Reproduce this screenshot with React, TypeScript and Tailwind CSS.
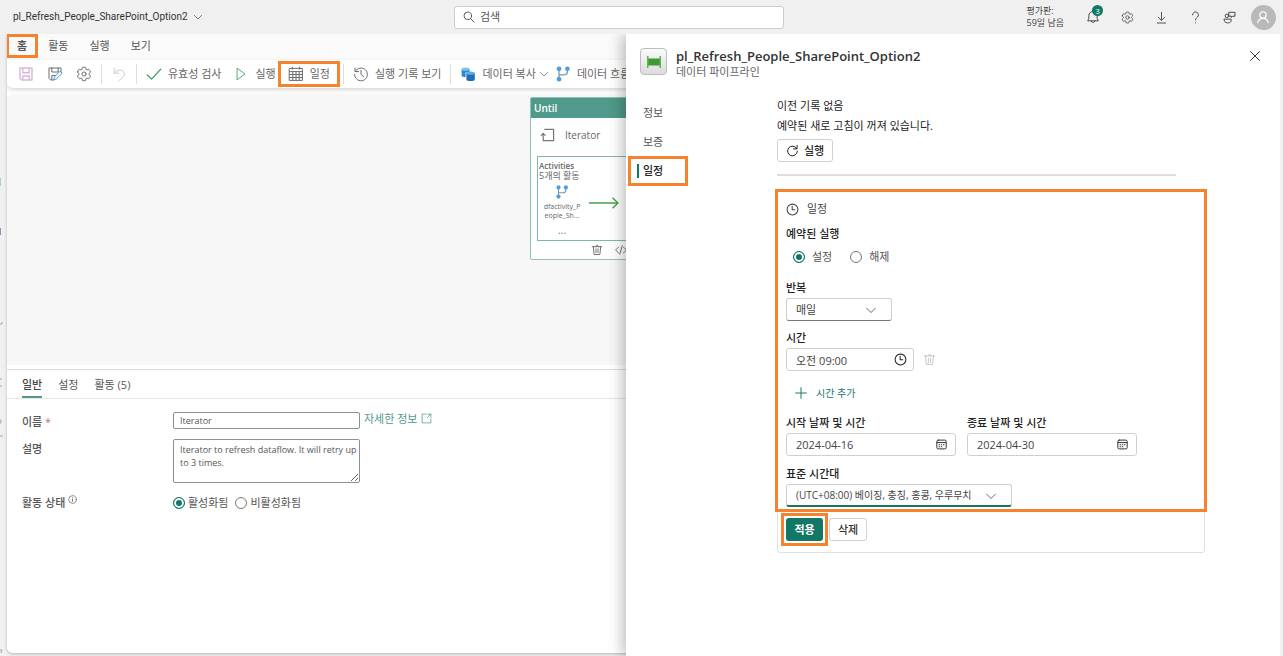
import type { ReactNode } from 'react'

type IconProps = { className?: string; children?: ReactNode }

function Icon({ className = 'size-4', children }: IconProps) {
  return (
    <svg
      viewBox="0 0 20 20"
      fill="none"
      stroke="currentColor"
      strokeWidth="1.2"
      strokeLinecap="round"
      strokeLinejoin="round"
      aria-hidden="true"
      className={`shrink-0 ${className}`}
    >
      {children}
    </svg>
  )
}

const Chevron = ({ className = 'size-[10px]' }: IconProps) => (
  <Icon className={className}>
    <path d="M1 6l9 9 9-9" strokeWidth="1.6" />
  </Icon>
)

const Gear = ({ className }: IconProps) => (
  <Icon className={className}>
    <path d="M1.91 7.38A8.5 8.5 0 0 1 3.7 4.3a.5.5 0 0 1 .54-.13l1.92.68a1 1 0 0 0 1.32-.76l.36-2a.5.5 0 0 1 .4-.4 8.53 8.53 0 0 1 3.55 0c.2.04.35.2.38.4l.37 2a1 1 0 0 0 1.32.76l1.92-.68a.5.5 0 0 1 .54.13 8.5 8.5 0 0 1 1.78 3.08c.06.2 0 .4-.15.54l-1.56 1.32a1 1 0 0 0 0 1.52l1.56 1.32a.5.5 0 0 1 .15.54 8.5 8.5 0 0 1-1.78 3.08.5.5 0 0 1-.54.13l-1.92-.68a1 1 0 0 0-1.32.76l-.37 2a.5.5 0 0 1-.38.4 8.53 8.53 0 0 1-3.56 0 .5.5 0 0 1-.39-.4l-.36-2a1 1 0 0 0-1.32-.76l-1.92.68a.5.5 0 0 1-.54-.13 8.5 8.5 0 0 1-1.78-3.08.5.5 0 0 1 .15-.54l1.56-1.32a1 1 0 0 0 0-1.52L2.06 7.92a.5.5 0 0 1-.15-.54z" />
    <circle cx="10" cy="10" r="2.6" />
  </Icon>
)

const Clock = ({ className }: IconProps) => (
  <Icon className={className}>
    <circle cx="10" cy="10" r="8.3" strokeWidth="1.6" />
    <path d="M9.5 5v5.5h4" strokeWidth="1.6" />
  </Icon>
)

const Trash = ({ className }: IconProps) => (
  <Icon className={className}>
    <path d="M2 4.5h16M7.5 4.5C7.5 1 12.5 1 12.5 4.5M3.8 4.5l1.4 13h9.6l1.4-13M8.3 8v6.5M11.7 8v6.5" strokeWidth="1.5" />
  </Icon>
)

const Branch = ({ className }: IconProps) => (
  <Icon className={className}>
    <path d="M5 4v12M5 11h6.5c2.5 0 4-1.5 4-4V4" stroke="#7f95a8" strokeWidth="1.6" />
    <g fill="#4f9fdc" stroke="none">
      <circle cx="5" cy="3.5" r="3" />
      <circle cx="15.5" cy="3.5" r="3" />
      <circle cx="5" cy="16.5" r="3" />
    </g>
  </Icon>
)

const CalendarSmall = () => (
  <Icon className="size-[11px] text-[#333]">
    <rect x="1.5" y="2" width="17" height="16" rx="2.5" strokeWidth="1.8" />
    <path d="M2 6.5h16" strokeWidth="1.8" />
    <path d="M5.5 10.5h1M9.5 10.5h1M13.5 10.5h1M5.5 14h1M9.5 14h1" strokeWidth="2" />
  </Icon>
)

/** Orange call-out frame drawn over the element that contains it. */
function Callout({ className }: { className: string }) {
  return <span aria-hidden="true" className={`pointer-events-none absolute border-3 border-[#f5822f] ${className}`} />
}

function Divider() {
  return <span className="mx-[9px] h-5 w-px shrink-0 bg-[#dedede]" />
}

function Tool({ label, children }: { label: string; children: ReactNode }) {
  return (
    <button type="button" className="flex shrink-0 items-center gap-[6px] whitespace-nowrap">
      {children}
      {label}
    </button>
  )
}

const radio =
  'size-3 shrink-0 appearance-none rounded-full border border-[#757575] bg-white checked:border-[#117865] checked:bg-[#117865] checked:shadow-[inset_0_0_0_2px_white]'
const field = 'h-[23px] w-full rounded-[3px] border border-[#cfcfcf] bg-white pl-[9px] text-[#444]'
const textField = 'rounded-[2px] border border-[#8f8f8f] pl-[6px] text-[9px]'

function TopBar() {
  return (
    <header className="mr-[3px] flex h-[34px] shrink-0 items-center text-[#444]">
      <div className="flex shrink-0 basis-[454px] items-center pl-[13px]">
        <button type="button" className="flex items-center gap-[6px] font-['Roboto','Noto_Sans_CJK_KR',sans-serif] text-[10px] text-[#333]">
          pl_Refresh_People_SharePoint_Option2
          <Chevron className="size-2" />
        </button>
      </div>
      <label className="flex h-[23px] w-[330px] items-center gap-[5px] rounded-[3px] border border-[#cccccc] bg-white pl-2">
        <Icon className="size-3 text-[#555]">
          <circle cx="8" cy="8" r="6.3" strokeWidth="1.6" />
          <path d="M12.7 12.7L18.5 18.5" strokeWidth="1.6" />
        </Icon>
        <input type="search" aria-label="검색" placeholder="검색" className="min-w-0 flex-1 bg-transparent outline-none placeholder:text-[#555]" />
      </label>
      <p className="ml-auto pr-3 text-[9px] leading-3 whitespace-nowrap">
        평가판:
        <br />
        59일 남음
      </p>
      <nav className="grid shrink-0 grid-cols-[repeat(6,34px)] place-items-center">
        <button type="button" aria-label="알림" className="relative">
          <Icon className="size-[14px]">
            <path d="M10 2a6 6 0 0 0-6 6v4l-1.5 3.5h15L16 12V8a6 6 0 0 0-6-6zM7.5 15.5c0 3.3 5 3.3 5 0" strokeWidth="1.4" />
          </Icon>
          <span className="absolute -top-[5px] left-[6px] size-[11px] rounded-full bg-[#117865] text-center text-[8px] leading-[11px] text-white">3</span>
        </button>
        <button type="button" aria-label="설정">
          <Gear className="size-[13px]" />
        </button>
        <button type="button" aria-label="다운로드">
          <Icon className="size-[13px]">
            <path d="M10 2v12M5 9.5l5 5 5-5M3.5 18.5h13" strokeWidth="1.4" />
          </Icon>
        </button>
        <button type="button" aria-label="도움말">
          <Icon className="size-[13px]">
            <path d="M5.5 6a4.5 4.5 0 1 1 7.5 3.3c-1.7 1.5-3 2.5-3 4.7M10 18v.3" strokeWidth="1.5" />
          </Icon>
        </button>
        <button type="button" aria-label="피드백">
          <Icon className="size-[13px]">
            <path d="M9.5 2h9v6h-3.5l-2 2V8h-3.5zM2 12.5h10.5v2.5c0 4.5-10.5 4.5-10.5 0z" strokeWidth="1.5" />
            <circle cx="6" cy="7.5" r="2.7" strokeWidth="1.5" />
          </Icon>
        </button>
        <button type="button" aria-label="계정" className="grid size-[25px] place-items-center rounded-full bg-[#b9b9b9] text-white">
          <Icon className="size-[14px]">
            <circle cx="10" cy="7" r="4.5" strokeWidth="1.7" />
            <path d="M2.5 18c1-4 3-6 7.5-6s6.5 2 7.5 6" strokeWidth="1.7" />
          </Icon>
        </button>
      </nav>
    </header>
  )
}

function Ribbon() {
  return (
    <>
      <nav className="flex h-[26px] items-center gap-[21px] bg-[#fafafa] pr-4 pb-[3px] pl-[10px] text-[#555]">
        <button type="button" className="relative font-semibold">
          홈
          <Callout className="-inset-x-[11px] -top-[4px] -bottom-[4px]" />
        </button>
        <button type="button">활동</button>
        <button type="button">실행</button>
        <button type="button">보기</button>
      </nav>
      <div className="flex h-7 shrink-0 items-center overflow-visible rounded-b-md bg-white pl-[11px] text-[#666] shadow-[0_2px_4px_rgba(0,0,0,0.16)]">
        <div className="flex items-center gap-[13px]">
          <button type="button" aria-label="저장" className="text-[#d9b8dc]">
            <Icon>
              <path d="M2.5 2.5h15v15h-13l-2-2zM6 2.5v6h8v-6M6 17.5v-5h8v5" strokeWidth="1.8" />
            </Icon>
          </button>
          <button type="button" aria-label="다른 이름으로 저장">
            <Icon>
              <path d="M8 17.5H4.5l-2-2v-13h15v5M6 2.5v5h8v-5M6 17v-5h5" />
              <path d="M8.5 17l.8-3.5 7.2-7 2.5 2.5-7.2 7z" stroke="#3f94d6" />
            </Icon>
          </button>
          <button type="button" aria-label="파이프라인 설정">
            <Gear />
          </button>
        </div>
        <Divider />
        <button type="button" aria-label="실행 취소" className="text-[#c9c9c9]">
          <Icon>
            <path d="M4 3v6h6M4 9c4-5.5 11-5 12.5-.5 1.2 4-2.5 6.5-7 10" />
          </Icon>
        </button>
        <Divider />
        <div className="flex items-center gap-3 pr-1">
          <Tool label="유효성 검사">
            <Icon className="size-4 text-[#2f9a5b]">
              <path d="M1.5 11l5.5 5.5L18.5 4" strokeWidth="1.5" />
            </Icon>
          </Tool>
          <Tool label="실행">
            <Icon className="size-4 text-[#4aa96f]">
              <path d="M5.5 3l9.5 7-9.5 7z" />
            </Icon>
          </Tool>
          <div className="relative">
            <Tool label="일정">
              <Icon>
                <path d="M2 3h16v15H2zM2 7h16M2 10.7h16M2 14.4h16M6 7v11M10 7v11M14 7v11M5.5 1.5V4M14.5 1.5V4" />
              </Icon>
            </Tool>
            <Callout className="-inset-x-[10px] -inset-y-[5px]" />
          </div>
        </div>
        <Divider />
        <Tool label="실행 기록 보기">
          <Icon>
            <path d="M2.5 2.5v4.5h4.5M2.8 7a8 8 0 1 1-.8 3.5M10 5.5v5l3.5 3" />
          </Icon>
        </Tool>
        <Divider />
        <div className="flex items-center gap-[7px]">
          <div className="flex items-center gap-1">
            <Tool label="데이터 복사">
              <Icon>
                <g stroke="none">
                  <path d="M2 4v8c0 1.5 2 2 5 2V8h5V4z" fill="#2e8ad0" />
                  <ellipse cx="7" cy="4" rx="5" ry="2" fill="#7fc1ee" />
                  <path d="M8 9v8c0 2.5 10.5 2.5 10.5 0V9z" fill="#1f6fb5" />
                  <ellipse cx="13.2" cy="9" rx="5.2" ry="2" fill="#5aaee6" />
                </g>
              </Icon>
            </Tool>
            <Chevron className="size-2" />
          </div>
          <Tool label="데이터 흐름">
            <Branch />
          </Tool>
        </div>
      </div>
    </>
  )
}

function UntilNode() {
  return (
    <article className="absolute top-[3px] left-[523px] w-[214px] rounded-[2px] border border-[#8fc4b2] bg-white text-[#666]">
      <h2 className="bg-[#4f9a8a] px-[3px] text-[10px] leading-5 font-semibold text-white">Until</h2>
      <div className="flex h-[38px] items-center gap-[9px] pb-[5px] pl-[9px]">
        <Icon className="size-4 text-[#777]">
          <path d="M6 3h11v14H4V8M1.5 10.5L4 8l2.5 2.5" strokeWidth="1.5" />
        </Icon>
        <span className="text-[10px]">Iterator</span>
      </div>
      <div className="mx-[6px] h-[85px] border border-[#7fb8a6] px-px pt-1">
        <h3 className="text-[8px] leading-[10px] font-semibold">Activities</h3>
        <p className="text-[9px] leading-[10px]">5개의 활동</p>
        <div className="flex gap-1 pt-1">
          <div className="flex w-[46px] flex-col items-center text-center">
            <Branch className="size-[14px]" />
            <span className="pt-[3px] text-[7px] leading-[9px]">
              dfactivity_P
              <br />
              eople_Sh...
            </span>
            <span className="pt-[5px] leading-[10px] text-[#5f86a0]">...</span>
          </div>
          <svg viewBox="0 0 30 12" fill="none" stroke="#4aa24a" strokeWidth="1.5" aria-hidden="true" className="mt-3 h-3 w-[30px]">
            <path d="M0 6h29M23.5 .8L29 6l-5.5 5.2" />
          </svg>
        </div>
      </div>
      <div className="flex h-[18px] items-center gap-3 pl-[60px]">
        <button type="button" aria-label="활동 삭제">
          <Trash className="size-3" />
        </button>
        <button type="button" aria-label="코드 보기">
          <Icon className="size-3">
            <path d="M6 5l-5 5 5 5M14 5l5 5-5 5M12 3L8 17" strokeWidth="1.5" />
          </Icon>
        </button>
      </div>
    </article>
  )
}

function Details() {
  return (
    <section className="flex-1 border-t border-[#dcdcdc] bg-white text-[#555]">
      <div role="tablist" className="flex h-[29px] items-stretch gap-4 border-b border-[#e6e6e6] pl-[15px]">
        <button type="button" role="tab" aria-selected="true" className="border-b-2 border-[#4f9a8a] pt-1 font-medium text-[#444]">
          일반
        </button>
        <button type="button" role="tab" aria-selected="false" className="pt-[2px]">
          설정
        </button>
        <button type="button" role="tab" aria-selected="false" className="pt-[2px]">
          활동 (5)
        </button>
      </div>
      <div className="grid grid-cols-[151px_187px_auto] items-start gap-y-[9px] pt-[13px] pl-[15px]">
        <label htmlFor="activity-name" className="pt-[2px] font-medium">
          이름 <span className="text-[#c9706c]">*</span>
        </label>
        <input id="activity-name" defaultValue="Iterator" className={`h-[17px] ${textField}`} />
        <a href="#details" className="flex items-center gap-1 pl-1 leading-[13px] text-[#4f9a8a]">
          자세한 정보
          <Icon className="size-[11px]">
            <path d="M9 2H2v16h16v-7M12 2h6v6M18 2l-7 7" strokeWidth="1.4" />
          </Icon>
        </a>
        <label htmlFor="activity-description" className="pt-[2px] font-medium">
          설명
        </label>
        <textarea
          id="activity-description"
          defaultValue="Iterator to refresh dataflow. It will retry up to 3 times."
          className={`col-span-2 h-11 w-[187px] py-[3px] leading-[13px] ${textField}`}
        />
        <span className="flex items-start gap-[3px] pt-[3px] font-medium">
          활동 상태
          <Icon className="size-[9px]">
            <circle cx="10" cy="10" r="8.5" strokeWidth="1.5" />
            <path d="M10 9v5M10 6v.3" strokeWidth="1.8" />
          </Icon>
        </span>
        <div className="col-span-2 flex gap-[7px] pt-[3px]">
          <label className="flex items-center gap-[3px]">
            <input type="radio" name="state" defaultChecked className={radio} />
            활성화됨
          </label>
          <label className="flex items-center gap-[3px]">
            <input type="radio" name="state" className={radio} />
            비활성화됨
          </label>
        </div>
      </div>
    </section>
  )
}

function DateField({ id, label, value }: { id: string; label: string; value: string }) {
  return (
    <div className="w-[170px]">
      <label htmlFor={id} className="mb-[2px] block font-medium text-[#222]">
        {label}
      </label>
      <div className="relative">
        <input id={id} defaultValue={value} className={field} />
        <span className="absolute inset-y-0 right-[9px] flex items-center">
          <CalendarSmall />
        </span>
      </div>
    </div>
  )
}

function ScheduleForm() {
  return (
    <form className="relative mt-[14px] w-[428px] rounded-[3px] border border-[#e0e0e0] px-2 pt-[10px] pb-[11px]">
      <Callout className="-inset-x-[3px] -top-[2px] bottom-[40px]" />
      <h2 className="flex items-center gap-2 text-[#444]">
        <Clock className="size-[13px]" />
        일정
      </h2>
      <fieldset className="mt-[9px]">
        <legend className="font-medium text-[#222]">예약된 실행</legend>
        <div className="mt-[7px] flex gap-[18px] pl-[7px] text-[#555]">
          <label className="flex items-center gap-[7px]">
            <input type="radio" name="scheduled" defaultChecked className={radio} />
            설정
          </label>
          <label className="flex items-center gap-[7px]">
            <input type="radio" name="scheduled" className={radio} />
            해제
          </label>
        </div>
      </fieldset>
      <label htmlFor="repeat" className="mt-[15px] mb-[2px] block font-medium text-[#222]">
        반복
      </label>
      <div className="relative w-[106px]">
        <select id="repeat" className={`${field} appearance-none border-b-[#777]`}>
          <option>매일</option>
        </select>
        <span className="pointer-events-none absolute inset-y-0 right-4 flex items-center text-[#444]">
          <Chevron />
        </span>
      </div>
      <label htmlFor="time" className="mt-[9px] mb-[2px] block font-medium text-[#222]">
        시간
      </label>
      <div className="flex items-center gap-[9px]">
        <div className="relative w-[128px]">
          <input id="time" defaultValue="오전 09:00" className={field} />
          <span className="absolute inset-y-0 right-[7px] flex items-center text-[#222]">
            <Clock className="size-[13px]" />
          </span>
        </div>
        <button type="button" aria-label="시간 삭제" className="text-[#c4c4c4]">
          <Trash className="size-[13px]" />
        </button>
      </div>
      <button type="button" className="mt-[14px] flex items-center gap-[9px] pl-[9px] text-[10px] text-[#117865]">
        <Icon className="size-3">
          <path d="M10 1v18M1 10h18" strokeWidth="1.6" />
        </Icon>
        시간 추가
      </button>
      <div className="mt-[14px] flex gap-[11px]">
        <DateField id="start-date" label="시작 날짜 및 시간" value="2024-04-16" />
        <DateField id="end-date" label="종료 날짜 및 시간" value="2024-04-30" />
      </div>
      <label htmlFor="time-zone" className="mt-[10px] mb-[2px] block font-medium text-[#222]">
        표준 시간대
      </label>
      <div className="relative w-[226px]">
        <select id="time-zone" className={`${field} appearance-none border-b-2 border-b-[#117865] text-[10px]`}>
          <option>(UTC+08:00) 베이징, 충칭, 홍콩, 우루무치</option>
        </select>
        <span className="pointer-events-none absolute inset-y-0 right-4 flex items-center text-[#444]">
          <Chevron />
        </span>
      </div>
      <div className="mt-[11px] flex gap-[6px]">
        <div className="relative">
          <button type="submit" className="h-[23px] w-[37px] rounded-[3px] bg-[#117865] font-semibold text-white">
            적용
          </button>
          <Callout className="-inset-[5px]" />
        </div>
        <button type="button" className="h-[23px] w-[38px] rounded-[3px] border border-[#d1d1d1] bg-white font-medium text-[#333]">
          삭제
        </button>
      </div>
    </form>
  )
}

function SchedulePanel() {
  return (
    <aside className="absolute inset-y-0 right-0 w-[654px] bg-white px-[14px] pt-[14px] shadow-[-3px_0_14px_rgba(0,0,0,0.28)]">
      <header className="flex items-start gap-[9px]">
        <span className="grid size-[27px] shrink-0 place-items-center rounded-[4px] border border-[#bdbdbd] bg-linear-to-b from-[#fafafa] to-[#dcdcdc]">
          <svg viewBox="0 0 16 14" aria-hidden="true" className="h-[14px] w-4">
            <path d="M2 3.5h12v7H2z" fill="#3f9a35" />
            <path d="M1 1h1.5v12H1zM13.5 1H15v12h-1.5z" fill="#5fb552" />
          </svg>
        </span>
        <div className="min-w-0 flex-1">
          <h1 className="text-[13px] leading-4 font-semibold text-[#333]">pl_Refresh_People_SharePoint_Option2</h1>
          <p className="text-[#666]">데이터 파이프라인</p>
        </div>
        <button type="button" aria-label="닫기" className="mt-[2px] mr-[5px] text-[#222]">
          <Icon className="size-3">
            <path d="M2.5 2.5l15 15M17.5 2.5l-15 15" strokeWidth="1.5" />
          </Icon>
        </button>
      </header>
      <div className="flex pt-[18px]">
        <nav className="flex w-[137px] shrink-0 flex-col items-start gap-[13px] pt-[7px] pl-[3px] text-[#555]">
          <a href="#about">정보</a>
          <a href="#endorsement">보증</a>
          <a href="#schedule" aria-current="page" className="relative font-medium text-[#222]">
            <span className="absolute inset-y-[1px] -left-[6px] w-[2px] bg-[#117865]" />
            일정
            <Callout className="-inset-y-[7px] -left-[15px] w-[60px]" />
          </a>
        </nav>
        <div className="min-w-0 flex-1 text-[#222]">
          <p>이전 기록 없음</p>
          <p className="mt-1">예약된 새로 고침이 꺼져 있습니다.</p>
          <button type="button" className="mt-[5px] flex h-[23px] items-center gap-[5px] rounded-[3px] border border-[#d1d1d1] px-2 font-medium">
            <Icon className="size-[13px]">
              <path d="M16.5 7A7.5 7.5 0 1 0 17.5 11M17 2v5.5h-5.5" strokeWidth="1.5" />
            </Icon>
            실행
          </button>
          <hr className="mt-[12px] w-[399px] border-t-2 border-[#dedede]" />
          <ScheduleForm />
        </div>
      </div>
    </aside>
  )
}

export default function App() {
  return (
    <div className="flex min-h-screen flex-col bg-[#f0f0f0] font-['Open_Sans','Noto_Sans_CJK_KR',sans-serif] text-[11px] leading-4">
      <TopBar />
      <div className="relative mr-[3px] flex flex-1 overflow-hidden">
        <div className="w-[7px] shrink-0">
          <svg viewBox="0 0 7 622" aria-hidden="true" className="h-[622px] w-[7px]">
            <path d="M0 144h1v8H0z" fill="#9fd0dc" />
            <path d="M0 194h1v7H0z" fill="#8f8fb8" />
            <path d="M0 290h2v-2M0 345h2M0 352h2M0 386h1v3H0M0 402h3M0 616h2l-1 3" fill="none" stroke="#a8a8a8" />
          </svg>
        </div>
        <main className="mb-[3px] flex min-w-0 flex-1 flex-col overflow-hidden rounded-bl-md bg-white shadow-[0_1px_3px_rgba(0,0,0,0.25)]">
          <Ribbon />
          <div className="relative mt-[6px] mb-1 h-[271px] shrink-0 overflow-hidden rounded-t-md bg-[#f7f7f7]">
            <UntilNode />
          </div>
          <Details />
        </main>
        <SchedulePanel />
      </div>
    </div>
  )
}
